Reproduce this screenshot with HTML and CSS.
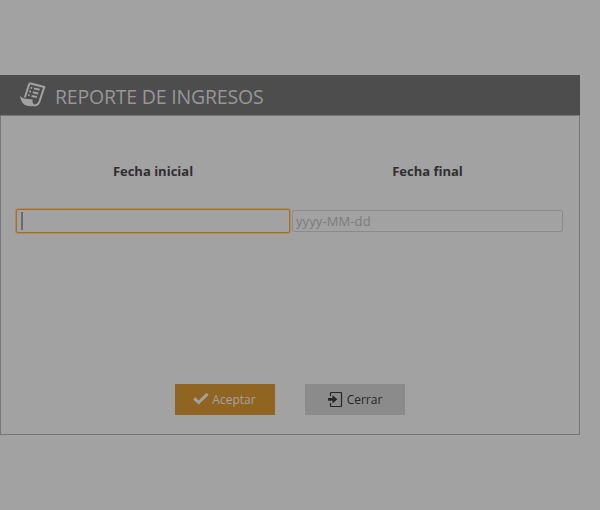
FILE: index.html
```html
<!DOCTYPE html>
<html lang="es">
<head>
<meta charset="utf-8">
<title>Reporte de ingresos</title>
<link rel="stylesheet" href="styles.css">
</head>
<body>
<main class="dialog">
  <header class="titlebar">
    <svg class="report" width="27" height="27" viewBox="0 0 27 27">
      <path d="M9.5 2.3 24.3 6 19.2 21.2Q17.5 25 13.5 24.3" fill="none" stroke="#a2a2a2" stroke-width="2"/>
      <path d="M9.5 2.3 4.8 16.5" stroke="#a2a2a2" stroke-width="2"/>
      <path d="M0 15Q3.5 18.7 12.5 18.2 11.8 22.5 15.5 24.6 10 26.4 5 24 1 21.5 0 15Z" fill="#a2a2a2"/>
      <path d="M10.6 6.6l1.6.4M14 7.4l5.6 1.4M9.3 10.3l1.6.4M12.8 11.2l5.4 1.3M8.1 14l1.6.4M11.6 14.9l5.3 1.2" stroke="#a2a2a2" stroke-width="2"/>
    </svg>
    <h1>REPORTE DE INGRESOS</h1>
  </header>
  <form class="content">
    <div class="fields">
      <label class="label" for="start">Fecha inicial</label>
      <label class="label" for="end">Fecha final</label>
      <div class="field focused" id="start"><span class="caret"></span></div>
      <div class="field" id="end">yyyy-MM-dd</div>
    </div>
    <div class="actions">
      <button type="button" class="button accept">
        <svg width="16" height="13" viewBox="0 0 16 13"><path d="M1.3 5.3 5.7 9.5 14.6 .9" fill="none" stroke="#a2a2a2" stroke-width="3"/></svg>
        <span>Aceptar</span>
      </button>
      <button type="button" class="button close">
        <svg width="15" height="16" viewBox="0 0 15 16"><path d="M2.5 4V1.5Q2.5 .5 3.5 .5H12.5Q13.5 .5 13.5 1.5V13.5Q13.5 14.5 12.5 14.5H3.5Q2.5 14.5 2.5 13.5V11" fill="none" stroke="#262626" stroke-width="1.2"/><path d="M0 6H4.5V3.2L9.3 7.3 4.5 11.4V8.7H0Z" fill="#262626"/></svg>
        <span>Cerrar</span>
      </button>
    </div>
  </form>
</main>
</body>
</html>
```
FILE: styles.css
```css
* { box-sizing: border-box; }
body {
  margin: 0;
  padding-top: 75px;
  height: 510px;
  overflow: hidden;
  background: #a2a2a2;
  font-family: "Open Sans", sans-serif;
  color: #303030;
}
.dialog { width: 580px; height: 360px; }
.titlebar {
  display: flex;
  align-items: center;
  height: 40px;
  padding-left: 20px;
  gap: 8px;
  background: #4d4d4d;
}
.report { margin-bottom: 2px; }
h1 {
  margin: 4px 0 0;
  font-size: 19.5px;
  font-weight: 400;
  line-height: 30px;
  letter-spacing: -.2px;
  color: #979797;
  white-space: nowrap;
}
.content {
  height: 320px;
  border: 1px solid #777;
  padding: 45px 16px 0 14px;
}
.fields {
  display: grid;
  grid-template-columns: 277px 271px;
  grid-template-rows: 20px 26px;
  row-gap: 27px;
  align-items: center;
}
.label {
  text-align: center;
  font-size: 13px;
  font-weight: 700;
  line-height: 20px;
}
.label:first-child { padding-right: 1px; }
.field {
  height: 22px;
  padding: 0 3px;
  border: 1px solid #8b8b8b;
  border-radius: 2px;
  font-size: 13px;
  line-height: 20px;
  letter-spacing: .1px;
  color: #7c7c7c;
}
.focused {
  align-self: start;
  height: 24px;
  width: 274px;
  margin: 1px 0 0 1px;
  padding: 2px 4px;
  border-color: #a8701e;
  border-radius: 2px;
  box-shadow: 0 0 0 1px rgba(168, 112, 30, .4);
}
.caret { display: block; width: 2px; height: 18px; background: #6b6b6b; }
.actions {
  display: flex;
  justify-content: center;
  gap: 30px;
  padding-left: 2px;
  margin-top: 150px;
}
.button {
  display: flex;
  align-items: center;
  justify-content: center;
  gap: 4px;
  width: 100px;
  height: 31px;
  padding: 0;
  border: 0;
  font: 12px "Open Sans", sans-serif;
}
.accept { background: #906522; color: #a2a2a2; gap: 3px; padding-right: 1px; }
.close { background: #8b8b8b; color: #262626; }
```
